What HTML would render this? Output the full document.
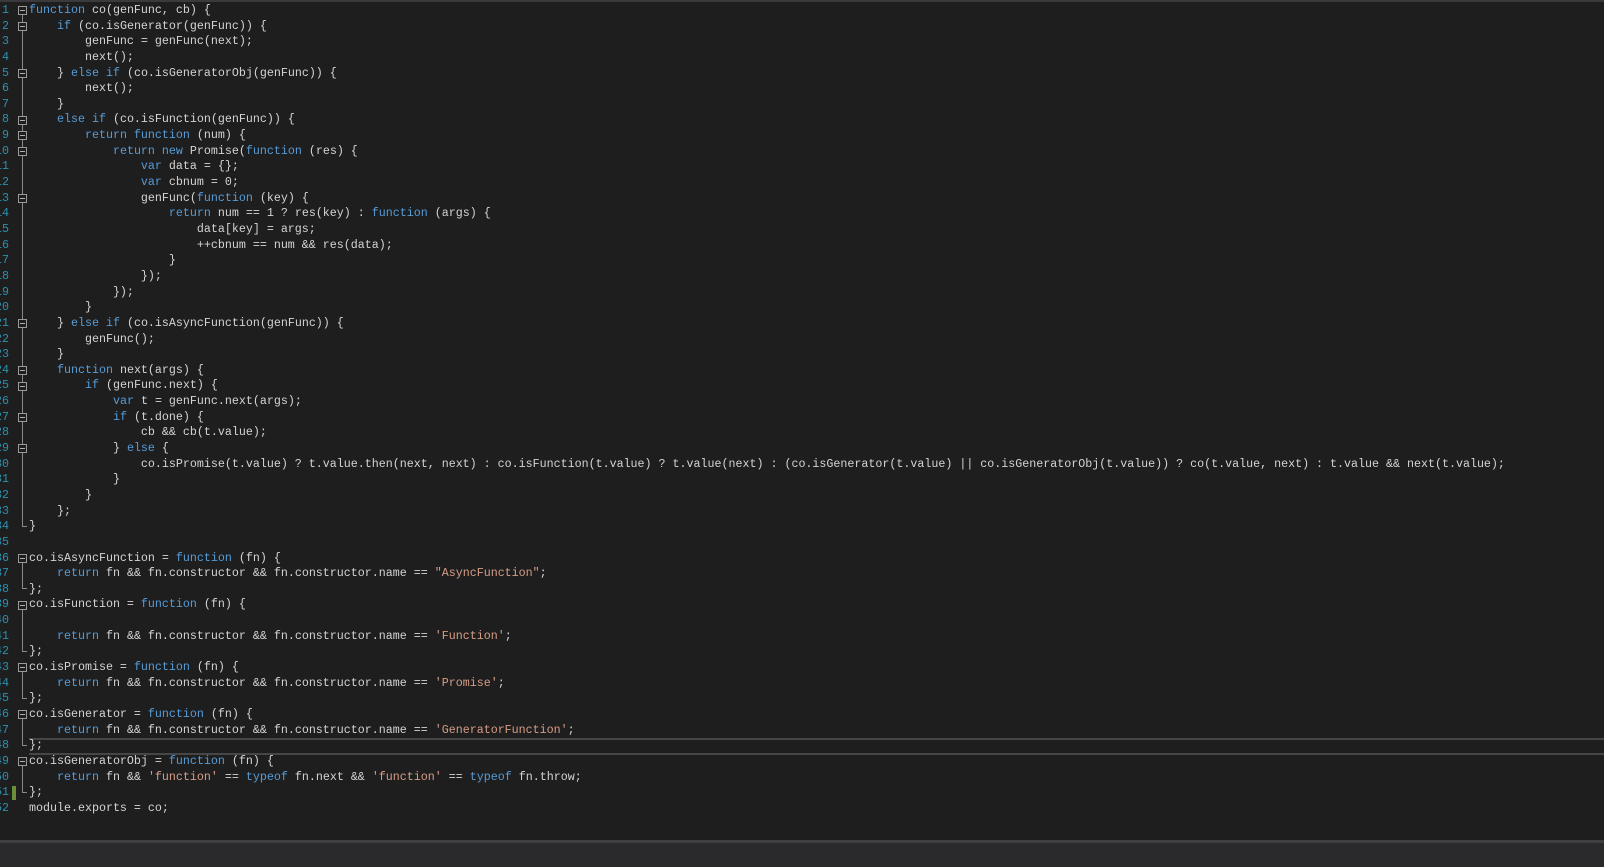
<!DOCTYPE html>
<html><head><meta charset="utf-8"><style>
html,body{margin:0;padding:0;background:#1e1e1f;width:1604px;height:864px;overflow:hidden}
#top{position:absolute;left:0;top:0;width:1604px;height:2px;background:#3a3a3c}
#bot{position:absolute;left:0;top:840px;width:1604px;height:24px;background:#2a2a2c;border-top:3px solid #3f3f42}
.l{position:absolute;left:29px;height:16px;line-height:16px;font-family:"Liberation Mono",monospace;font-size:11.67px;color:#d4d4d4;white-space:pre}
.n{position:absolute;left:-20px;width:29px;text-align:right;height:16px;line-height:16px;font-family:"Liberation Mono",monospace;font-size:11.67px;color:#2b91af}
.f{position:absolute;left:18px;width:7px;height:7px;border:1px solid #9a9a9a;box-sizing:content-box;background:#1e1e1f;z-index:2}
.f:after{content:"";position:absolute;left:1px;top:3px;width:5px;height:1px;background:#b0b0b0}
.v{position:absolute;left:22px;width:1px;background:#8a8a8a}
.e{position:absolute;left:22px;width:5px;height:1px;background:#8a8a8a}
.k{color:#569cd6}.s{color:#d69d85}
#cur{position:absolute;left:29px;top:738px;width:1575px;height:13px;border-top:2px solid #464649;border-bottom:2px solid #464649}
#chg{position:absolute;left:12px;top:786px;width:4px;height:14px;background:#6b8e3a}
</style></head><body>
<div id="top"></div>
<div id="cur"></div>
<div id="chg"></div>
<div class="v" style="top:14px;height:512px"></div>
<div class="v" style="top:562px;height:26px"></div>
<div class="v" style="top:609px;height:42px"></div>
<div class="v" style="top:672px;height:26px"></div>
<div class="v" style="top:719px;height:26px"></div>
<div class="v" style="top:766px;height:26px"></div>
<div class="e" style="top:526px"></div><div class="e" style="top:588px"></div><div class="e" style="top:651px"></div><div class="e" style="top:698px"></div><div class="e" style="top:745px"></div><div class="e" style="top:792px"></div>
<div class="f" style="top:6px"></div><div class="f" style="top:22px"></div><div class="f" style="top:69px"></div><div class="f" style="top:116px"></div><div class="f" style="top:131px"></div><div class="f" style="top:147px"></div><div class="f" style="top:194px"></div><div class="f" style="top:319px"></div><div class="f" style="top:366px"></div><div class="f" style="top:382px"></div><div class="f" style="top:413px"></div><div class="f" style="top:444px"></div><div class="f" style="top:554px"></div><div class="f" style="top:601px"></div><div class="f" style="top:663px"></div><div class="f" style="top:710px"></div><div class="f" style="top:757px"></div>
<div class="n" style="top:2px">1</div><div class="n" style="top:18px">2</div><div class="n" style="top:33px">3</div><div class="n" style="top:49px">4</div><div class="n" style="top:65px">5</div><div class="n" style="top:80px">6</div><div class="n" style="top:96px">7</div><div class="n" style="top:111px">8</div><div class="n" style="top:127px">9</div><div class="n" style="top:143px">10</div><div class="n" style="top:158px">11</div><div class="n" style="top:174px">12</div><div class="n" style="top:190px">13</div><div class="n" style="top:205px">14</div><div class="n" style="top:221px">15</div><div class="n" style="top:237px">16</div><div class="n" style="top:252px">17</div><div class="n" style="top:268px">18</div><div class="n" style="top:284px">19</div><div class="n" style="top:299px">20</div><div class="n" style="top:315px">21</div><div class="n" style="top:331px">22</div><div class="n" style="top:346px">23</div><div class="n" style="top:362px">24</div><div class="n" style="top:377px">25</div><div class="n" style="top:393px">26</div><div class="n" style="top:409px">27</div><div class="n" style="top:424px">28</div><div class="n" style="top:440px">29</div><div class="n" style="top:456px">30</div><div class="n" style="top:471px">31</div><div class="n" style="top:487px">32</div><div class="n" style="top:503px">33</div><div class="n" style="top:518px">34</div><div class="n" style="top:534px">35</div><div class="n" style="top:550px">36</div><div class="n" style="top:565px">37</div><div class="n" style="top:581px">38</div><div class="n" style="top:596px">39</div><div class="n" style="top:612px">40</div><div class="n" style="top:628px">41</div><div class="n" style="top:643px">42</div><div class="n" style="top:659px">43</div><div class="n" style="top:675px">44</div><div class="n" style="top:690px">45</div><div class="n" style="top:706px">46</div><div class="n" style="top:722px">47</div><div class="n" style="top:737px">48</div><div class="n" style="top:753px">49</div><div class="n" style="top:769px">50</div><div class="n" style="top:784px">51</div><div class="n" style="top:800px">52</div>
<div class="l" style="top:2px"><span class="k">function</span> co(genFunc, cb) {</div>
<div class="l" style="top:18px">    <span class="k">if</span> (co.isGenerator(genFunc)) {</div>
<div class="l" style="top:33px">        genFunc = genFunc(next);</div>
<div class="l" style="top:49px">        next();</div>
<div class="l" style="top:65px">    } <span class="k">else if</span> (co.isGeneratorObj(genFunc)) {</div>
<div class="l" style="top:80px">        next();</div>
<div class="l" style="top:96px">    }</div>
<div class="l" style="top:111px">    <span class="k">else if</span> (co.isFunction(genFunc)) {</div>
<div class="l" style="top:127px">        <span class="k">return function</span> (num) {</div>
<div class="l" style="top:143px">            <span class="k">return new</span> Promise(<span class="k">function</span> (res) {</div>
<div class="l" style="top:158px">                <span class="k">var</span> data = {};</div>
<div class="l" style="top:174px">                <span class="k">var</span> cbnum = 0;</div>
<div class="l" style="top:190px">                genFunc(<span class="k">function</span> (key) {</div>
<div class="l" style="top:205px">                    <span class="k">return</span> num == 1 ? res(key) : <span class="k">function</span> (args) {</div>
<div class="l" style="top:221px">                        data[key] = args;</div>
<div class="l" style="top:237px">                        ++cbnum == num &amp;&amp; res(data);</div>
<div class="l" style="top:252px">                    }</div>
<div class="l" style="top:268px">                });</div>
<div class="l" style="top:284px">            });</div>
<div class="l" style="top:299px">        }</div>
<div class="l" style="top:315px">    } <span class="k">else if</span> (co.isAsyncFunction(genFunc)) {</div>
<div class="l" style="top:331px">        genFunc();</div>
<div class="l" style="top:346px">    }</div>
<div class="l" style="top:362px">    <span class="k">function</span> next(args) {</div>
<div class="l" style="top:377px">        <span class="k">if</span> (genFunc.next) {</div>
<div class="l" style="top:393px">            <span class="k">var</span> t = genFunc.next(args);</div>
<div class="l" style="top:409px">            <span class="k">if</span> (t.done) {</div>
<div class="l" style="top:424px">                cb &amp;&amp; cb(t.value);</div>
<div class="l" style="top:440px">            } <span class="k">else</span> {</div>
<div class="l" style="top:456px">                co.isPromise(t.value) ? t.value.then(next, next) : co.isFunction(t.value) ? t.value(next) : (co.isGenerator(t.value) || co.isGeneratorObj(t.value)) ? co(t.value, next) : t.value &amp;&amp; next(t.value);</div>
<div class="l" style="top:471px">            }</div>
<div class="l" style="top:487px">        }</div>
<div class="l" style="top:503px">    };</div>
<div class="l" style="top:518px">}</div>
<div class="l" style="top:550px">co.isAsyncFunction = <span class="k">function</span> (fn) {</div>
<div class="l" style="top:565px">    <span class="k">return</span> fn &amp;&amp; fn.constructor &amp;&amp; fn.constructor.name == <span class="s">"AsyncFunction"</span>;</div>
<div class="l" style="top:581px">};</div>
<div class="l" style="top:596px">co.isFunction = <span class="k">function</span> (fn) {</div>
<div class="l" style="top:628px">    <span class="k">return</span> fn &amp;&amp; fn.constructor &amp;&amp; fn.constructor.name == <span class="s">'Function'</span>;</div>
<div class="l" style="top:643px">};</div>
<div class="l" style="top:659px">co.isPromise = <span class="k">function</span> (fn) {</div>
<div class="l" style="top:675px">    <span class="k">return</span> fn &amp;&amp; fn.constructor &amp;&amp; fn.constructor.name == <span class="s">'Promise'</span>;</div>
<div class="l" style="top:690px">};</div>
<div class="l" style="top:706px">co.isGenerator = <span class="k">function</span> (fn) {</div>
<div class="l" style="top:722px">    <span class="k">return</span> fn &amp;&amp; fn.constructor &amp;&amp; fn.constructor.name == <span class="s">'GeneratorFunction'</span>;</div>
<div class="l" style="top:737px">};</div>
<div class="l" style="top:753px">co.isGeneratorObj = <span class="k">function</span> (fn) {</div>
<div class="l" style="top:769px">    <span class="k">return</span> fn &amp;&amp; <span class="s">'function'</span> == <span class="k">typeof</span> fn.next &amp;&amp; <span class="s">'function'</span> == <span class="k">typeof</span> fn.throw;</div>
<div class="l" style="top:784px">};</div>
<div class="l" style="top:800px">module.exports = co;</div>
<div id="bot"></div>
</body></html>
